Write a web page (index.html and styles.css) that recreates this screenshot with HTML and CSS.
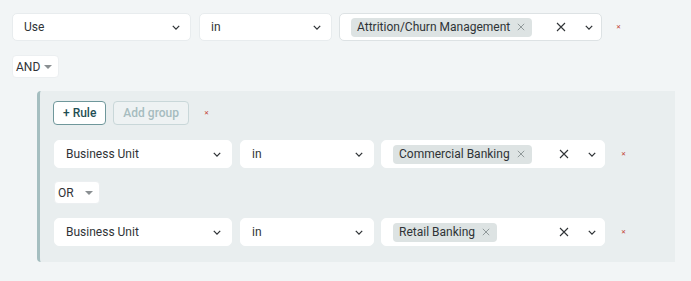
FILE: index.html
```html
<!DOCTYPE html>
<html lang="en">

<head>
    <meta charset="UTF-8">
    <meta name="viewport" content="width=device-width, initial-scale=1.0">
    <title>Query Builder</title>
    <link rel="stylesheet" href="styles.css">
</head>

<body>
    <div class="builder">
        <div class="rule">
            <div class="select field-top">
                <span class="select-text">Use</span>
                <svg class="chevron" viewBox="0 0 10 6"><path d="M1 1l4 4 4-4"></path></svg>
            </div>
            <div class="select op-top">
                <span class="select-text">in</span>
                <svg class="chevron" viewBox="0 0 10 6"><path d="M1 1l4 4 4-4"></path></svg>
            </div>
            <div class="select multi value-top">
                <span class="chip">Attrition/Churn Management
                    <svg class="chip-x" viewBox="0 0 10 10"><path d="M1 1l8 8M9 1l-8 8"></path></svg>
                </span>
                <svg class="clear" viewBox="0 0 10 10"><path d="M1 1l8 8M9 1l-8 8"></path></svg>
                <svg class="chevron" viewBox="0 0 10 6"><path d="M1 1l4 4 4-4"></path></svg>
            </div>
            <span class="remove">&#x2715;</span>
        </div>

        <div class="combinator and">
            <span>AND</span>
            <span class="caret"></span>
        </div>

        <div class="group">
            <div class="group-head">
                <button class="btn">+ Rule</button>
                <button class="btn" disabled>Add group</button>
                <span class="remove">&#x2715;</span>
            </div>

            <div class="rule">
                <div class="select field">
                    <span class="select-text">Business Unit</span>
                    <svg class="chevron" viewBox="0 0 10 6"><path d="M1 1l4 4 4-4"></path></svg>
                </div>
                <div class="select op">
                    <span class="select-text">in</span>
                    <svg class="chevron" viewBox="0 0 10 6"><path d="M1 1l4 4 4-4"></path></svg>
                </div>
                <div class="select multi value">
                    <span class="chip">Commercial Banking
                        <svg class="chip-x" viewBox="0 0 10 10"><path d="M1 1l8 8M9 1l-8 8"></path></svg>
                    </span>
                    <svg class="clear" viewBox="0 0 10 10"><path d="M1 1l8 8M9 1l-8 8"></path></svg>
                    <svg class="chevron" viewBox="0 0 10 6"><path d="M1 1l4 4 4-4"></path></svg>
                </div>
                <span class="remove">&#x2715;</span>
            </div>

            <div class="combinator or">
                <span>OR</span>
                <span class="caret"></span>
            </div>

            <div class="rule">
                <div class="select field">
                    <span class="select-text">Business Unit</span>
                    <svg class="chevron" viewBox="0 0 10 6"><path d="M1 1l4 4 4-4"></path></svg>
                </div>
                <div class="select op">
                    <span class="select-text">in</span>
                    <svg class="chevron" viewBox="0 0 10 6"><path d="M1 1l4 4 4-4"></path></svg>
                </div>
                <div class="select multi value">
                    <span class="chip">Retail Banking
                        <svg class="chip-x" viewBox="0 0 10 10"><path d="M1 1l8 8M9 1l-8 8"></path></svg>
                    </span>
                    <svg class="clear" viewBox="0 0 10 10"><path d="M1 1l8 8M9 1l-8 8"></path></svg>
                    <svg class="chevron" viewBox="0 0 10 6"><path d="M1 1l4 4 4-4"></path></svg>
                </div>
                <span class="remove">&#x2715;</span>
            </div>
        </div>
    </div>
</body>

</html>
```

FILE: styles.css
```css
body {
    margin: 0;
    background: #f2f5f6;
    font-family: 'Roboto', 'Inter', sans-serif;
    font-size: 12px;
    color: #2f3336;
}

.builder {
    padding: 13px 0 0 12px;
}

.rule {
    display: flex;
    align-items: center;
}

.select {
    display: flex;
    align-items: center;
    box-sizing: border-box;
    height: 28px;
    background: #ffffff;
    border: 1px solid #e8ecee;
    border-radius: 5px;
    padding: 0 10px 0 11px;
    margin-right: 8px;
}

.select-text {
    flex: 1;
}

.chevron {
    width: 8px;
    height: 5px;
    fill: none;
    stroke: #2f3336;
    stroke-width: 1.6;
}

.clear {
    width: 10px;
    height: 10px;
    fill: none;
    stroke: #2f3336;
    stroke-width: 1.1;
    margin-left: auto;
    margin-right: 19px;
}

/* value select with chips */
.multi {
    border-color: #dde2e4;
    padding-left: 11px;
    padding-right: 8px;
}

.chip {
    display: inline-flex;
    align-items: center;
    height: 19px;
    padding: 0 7px 0 6px;
    background: #dde3e3;
    border-radius: 4px;
    color: #2f3336;
    white-space: nowrap;
}

.chip-x {
    width: 8px;
    height: 8px;
    margin-left: 7px;
    fill: none;
    stroke: #8d9597;
    stroke-width: 1.2;
}

.remove {
    font-size: 6px;
    color: #c0392b;
    margin-left: 7px;
    line-height: 1;
}

.field-top { width: 179px; }
.op-top { width: 133px; margin-right: 7px; }
.value-top { width: 263px; margin-right: 7px; }

.combinator {
    display: inline-flex;
    align-items: center;
    box-sizing: border-box;
    height: 23px;
    background: #ffffff;
    border: 1px solid #eceff1;
    border-radius: 4px;
    padding: 0 6px 0 3px;
    font-size: 12px;
}

.caret {
    width: 0;
    height: 0;
    border-left: 4px solid transparent;
    border-right: 4px solid transparent;
    border-top: 4px solid #8a8f92;
    margin-left: auto;
    margin-top: 1px;
}

.and {
    margin-top: 14px;
    width: 47px;
}

.group {
    box-sizing: border-box;
    width: 638px;
    margin: 13px 0 0 25px;
    background: #e9eeef;
    border-left: 3px solid #a5bec0;
    border-radius: 4px 0 0 4px;
    padding: 10px 0 16px 13px;
}

.group-head {
    display: flex;
    align-items: center;
    gap: 7px;
    margin-bottom: 15px;
}

.group-head .remove {
    margin-left: 8px;
}

.btn {
    height: 24px;
    box-sizing: border-box;
    padding: 0 9px;
    border: 1px solid #6f979b;
    border-radius: 4px;
    background: #ffffff;
    color: #1f4e54;
    font-family: inherit;
    font-size: 12px;
    font-weight: 500;
}

.btn:disabled {
    background: #eef2f3;
    border-color: #c9d7d9;
    color: #a6bcbf;
}

.group .select {
    border-color: #ffffff;
    height: 28px;
}

.field { width: 178px; margin-left: 1px; }
.op { width: 134px; margin-right: 7px; }
.value { width: 224px; margin-right: 9px; }

.or {
    margin: 13px 0 14px 1px;
    width: 46px;
    padding-left: 3px;
    padding-right: 6px;
}
```
